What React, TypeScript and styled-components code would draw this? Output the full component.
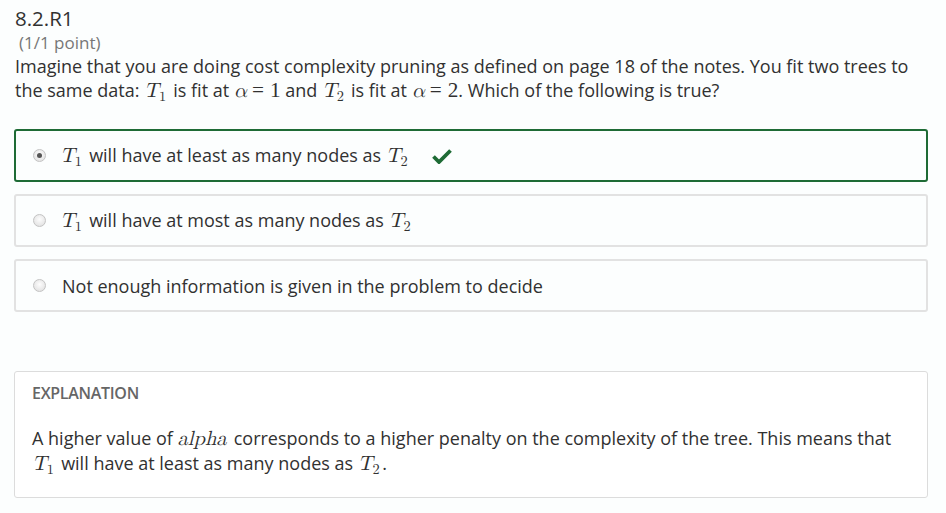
import React from "react";
import styled, { createGlobalStyle } from "styled-components";

const Global = createGlobalStyle`
  html, body { margin: 0; padding: 0; background: #fcfefe; }
  body { font-family: "Open Sans", "Noto Sans", sans-serif; color: #313131; }
`;

const Page = styled.div`
  padding: 4px 18px 0 15px;
  width: 946px;
  box-sizing: border-box;
`;

const Title = styled.h2`
  margin: 0;
  font-size: 20.5px;
  font-weight: 400;
  line-height: 28px;
  color: #313131;
`;

const Points = styled.div`
  margin: 1px 0 0 4px;
  font-size: 17px;
  line-height: 20px;
  color: #777;
`;

const Question = styled.p`
  margin: 1px 0 0;
  font-size: 18px;
  line-height: 24px;
`;

const Options = styled.div`
  display: flex;
  flex-direction: column;
  gap: 12px;
  margin: 26px 0 0 -1px;
`;

const Option = styled.label<{ $correct?: boolean }>`
  display: flex;
  align-items: center;
  gap: 16px;
  height: 53px;
  flex: none;
  box-sizing: border-box;
  padding: 0 0 0 17px;
  border: 2px solid ${(p) => (p.$correct ? "#1e6b35" : "#e2e2e2")};
  border-radius: 3px;
  font-size: 18px;
`;

const Radio = styled.span<{ $checked?: boolean }>`
  width: 13px;
  height: 13px;
  flex: none;
  border-radius: 50%;
  box-sizing: border-box;
  border: 1px solid #c3c3c3;
  background: radial-gradient(circle at 50% 40%, #fdfdfd, #dcdcdc);
  display: flex;
  align-items: center;
  justify-content: center;
  &::after {
    content: "";
    display: ${(p) => (p.$checked ? "block" : "none")};
    width: 5px;
    height: 5px;
    border-radius: 50%;
    background: #555;
  }
`;

const OptionText = styled.span<{ $math?: boolean }>`
  display: flex;
  align-items: baseline;
  margin-left: ${(p) => (p.$math ? "-2px" : "0")};
`;

const Check = styled.svg`
  width: 20px;
  height: 16px;
  margin-left: 6px;
  color: #1e6b35;
`;

const MathVar = styled.span`
  font-family: "Latin Modern Math", "DejaVu Serif", "Liberation Serif", serif;
  font-style: italic;
  font-size: 1.14em;
  white-space: nowrap;
  margin-right: 0.12em;
`;

const MathSub = styled.sub`
  font-style: normal;
  font-size: 0.7em;
  vertical-align: -0.28em;
  line-height: 0;
`;

const MathNum = styled.span`
  font-family: "Liberation Serif", "DejaVu Serif", serif;
  font-size: 1.18em;
`;

const MathOp = styled.span`
  font-family: "Liberation Serif", "DejaVu Serif", serif;
  font-size: 1.18em;
  margin: 0 0.28em 0 0.12em;
`;

const Explanation = styled.section`
  margin: 59px 0 0 -1px;
  background: #fff;
  border: 1px solid #dcdcdc;
  border-radius: 3px;
  padding: 11px 17px 21px;
`;

const ExplHeading = styled.h3`
  margin: 0;
  font-size: 16px;
  font-weight: 600;
  color: #666;
  line-height: 20px;
  letter-spacing: -0.3px;
`;

const ExplText = styled.p`
  margin: 23px 0 0;
  font-size: 18px;
  line-height: 25px;
`;

const T = ({ n }: { n: number }) => (
  <MathVar>
    T<MathSub>{n}</MathSub>
  </MathVar>
);

const Alpha = () => <MathVar>α</MathVar>;

export default function App() {
  return (
    <Page>
      <Global />
      <Title>8.2.R1</Title>
      <Points>(1/1 point)</Points>
      <Question>
        Imagine that you are doing cost complexity pruning as defined on page 18 of the notes. You fit two trees to the
        same data: <T n={1} /> is fit at <Alpha />
        <MathOp>=</MathOp>
        <MathNum>1</MathNum> and <T n={2} /> is fit at <Alpha />
        <MathOp>=</MathOp>
        <MathNum>2</MathNum>. Which of the following is true?
      </Question>
      <Options>
        <Option $correct>
          <Radio $checked />
          <OptionText $math>
            <T n={1} />&nbsp;will have at least as many nodes as&nbsp;<T n={2} />
          </OptionText>
          <Check viewBox="0 0 20 16">
            <path d="M1.5 8.5 L7 14 L18.5 2.5" fill="none" stroke="currentColor" strokeWidth="3.8" />
          </Check>
        </Option>
        <Option>
          <Radio />
          <OptionText $math>
            <T n={1} />&nbsp;will have at most as many nodes as&nbsp;<T n={2} />
          </OptionText>
        </Option>
        <Option>
          <Radio />
          <OptionText>Not enough information is given in the problem to decide</OptionText>
        </Option>
      </Options>
      <Explanation>
        <ExplHeading>EXPLANATION</ExplHeading>
        <ExplText>
          A higher value of <MathVar>alpha</MathVar> corresponds to a higher penalty on the complexity of the tree. This
          means that <T n={1} /> will have at least as many nodes as <T n={2} />.
        </ExplText>
      </Explanation>
    </Page>
  );
}
